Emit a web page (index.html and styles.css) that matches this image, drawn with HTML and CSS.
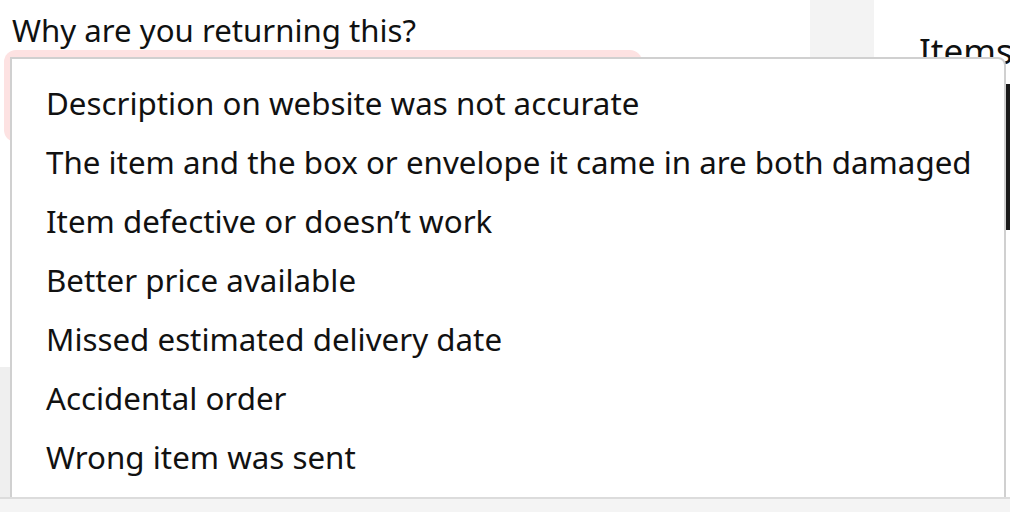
FILE: index.html
```html
<!DOCTYPE html>
<html lang="en">
<head>
<meta charset="utf-8">
<title>Return reason</title>
<link rel="stylesheet" href="styles.css">
</head>
<body>
<div class="page">
  <section class="main">
    <h2 class="question">Why are you returning this?</h2>
    <div class="select-shell"></div>
    <div class="lower-panel"></div>
  </section>
  <div class="gutter"></div>
  <aside class="side">
    <h3 class="side-title">Items</h3>
    <div class="thumb"></div>
  </aside>
</div>

<ul class="dropdown" role="listbox">
  <li class="option">Description on website was not accurate</li>
  <li class="option">The item and the box or envelope it came in are both damaged</li>
  <li class="option">Item defective or doesn’t work</li>
  <li class="option">Better price available</li>
  <li class="option">Missed estimated delivery date</li>
  <li class="option">Accidental order</li>
  <li class="option">Wrong item was sent</li>
</ul>

<div class="footer-bar"></div>
</body>
</html>
```

FILE: styles.css
```css
html, body {
  margin: 0;
  padding: 0;
  background: #fff;
  overflow: hidden;
  width: 1010px;
  height: 512px;
}

body {
  font-family: "Noto Sans", "Liberation Sans", sans-serif;
  color: #0f1111;
}

.page {
  display: flex;
  height: 512px;
}

.main {
  flex: 0 0 810px;
  display: flex;
  flex-direction: column;
}

.question {
  margin: 0;
  padding: 10px 0 0 12px;
  font-size: 31.2px;
  font-weight: 400;
  line-height: 40px;
  color: #0f1111;
  white-space: nowrap;
}

.select-shell {
  margin: 0 0 0 4px;
  width: 638px;
  height: 92px;
  border-radius: 12px;
  background: #fde2e2;
}

.lower-panel {
  margin-top: 225px;
  width: 10px;
  height: 140px;
  background: #efefef;
}

.gutter {
  flex: 0 0 64px;
  background: #f3f3f3;
}

.side {
  flex: 1 1 auto;
  min-width: 0;
  padding-left: 45px;
}

.side-title {
  margin: 0;
  padding-top: 31px;
  font-size: 35px;
  font-weight: 400;
  line-height: 40px;
  white-space: nowrap;
}

.thumb {
  margin-left: 87px;
  margin-top: 13px;
  width: 10px;
  height: 146px;
  background: #1a1a1a;
}

.dropdown {
  position: absolute;
  left: 10px;
  top: 57px;
  width: 996px;
  height: 470px;
  margin: 0;
  padding: 15px 0 0 0;
  list-style: none;
  background: #fff;
  border: 2px solid #d0d0d0;
  border-radius: 0 8px 0 0;
  box-sizing: border-box;
}

.option {
  padding-left: 34px;
  font-size: 31.3px;
  line-height: 59px;
  height: 59px;
  color: #111;
  white-space: nowrap;
}

.footer-bar {
  position: fixed;
  left: 0;
  right: 0;
  top: 497px;
  height: 15px;
  background: #f4f4f4;
  border-top: 2px solid #dcdcdc;
}
```
